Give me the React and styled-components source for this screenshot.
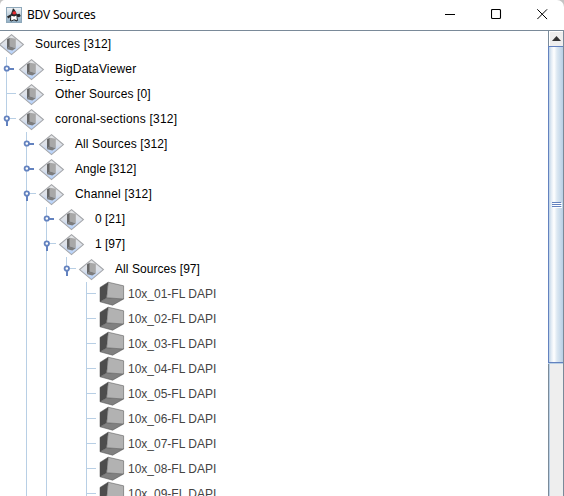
import React from "react";
import styled, { createGlobalStyle } from "styled-components";

const GlobalStyle = createGlobalStyle`
  html, body { margin: 0; padding: 0; background: #c4c4c4; overflow: hidden; }
  * { box-sizing: border-box; }
`;

const Window = styled.div`
  width: 564px;
  height: 496px;
  display: flex;
  flex-direction: column;
  background: #fff;
  overflow: hidden;
  border-radius: 5px 7px 0 0;
`;

const TitleBar = styled.header`
  flex: none;
  height: 30px;
  display: flex;
  align-items: center;
  padding-left: 6px;
`;

const Title = styled.h1`
  margin: 0 auto 0 5px;
  font: 400 12px/16px "Noto Sans", "Open Sans", sans-serif;
  letter-spacing: -0.22px;
  color: #000;
`;

const Controls = styled.div`
  display: flex;
  align-self: flex-start;
`;

const ControlButton = styled.button`
  width: 46px;
  height: 29px;
  padding: 0 0 0 3px;
  border: 0;
  background: none;
  display: grid;
  place-items: center;
`;

const Content = styled.main`
  flex: 1;
  min-height: 0;
  display: flex;
  border-top: 1px solid #7a8a99;
`;

const Tree = styled.ul`
  flex: 1;
  margin: 0;
  padding: 1px 0 0;
  list-style: none;
  overflow: hidden;
`;

const Row = styled.li`
  height: 25px;
  display: flex;
`;

const Guide = styled.svg`
  flex: none;
  display: block;
`;

const NodeIcon = styled.svg`
  flex: none;
  display: block;
  overflow: visible;
`;

const Label = styled.span`
  height: 25px;
  margin-left: ${(p) => (p.$leaf ? 3 : 10)}px;
  padding-top: 4px;
  white-space: pre;
  font: 12px/16px "Liberation Sans", Arial, sans-serif;
  letter-spacing: ${(p) => p.$spacing || 0}px;
  color: ${(p) => (p.$leaf ? "#444" : "#000")};
`;

const Clipped = styled.span`
  display: block;
  height: 4px;
  line-height: 16px;
  overflow: hidden;
`;

const ScrollBar = styled.aside`
  flex: none;
  width: 16px;
  display: flex;
  flex-direction: column;
  background: #eee;
  border-left: 1px solid #7a8a99;
  border-right: 1px solid #7a8a99;
  box-shadow: inset 1px 0 #b8cfe5;
`;

const ArrowButton = styled.button`
  height: 15px;
  padding: 0 0 2px;
  border: 0;
  border-top: 1px solid #fff;
  border-left: 1px solid #fff;
  background: #eee;
  display: grid;
  place-items: center;
`;

const Thumb = styled.div`
  height: 317px;
  margin-left: -1px;
  padding-left: 1px;
  border: 1px solid #6382bf;
  border-right: 0;
  box-shadow: 0 1px #b8cfe5;
  background: linear-gradient(90deg, #b8cfe5 0, #dfe9f3 2px, #fff 5px, #dce8f2 8px, #b8cfe5 14px);
  display: grid;
  place-items: center;
`;

const line = "#b8cfe5";
const accent = "#6382bf";

// One row's 25px-high slice of the connecting lines and its expand handle.
function Guides({ depth, through, handle, last, leaf }) {
  if (!depth) return null;
  const x = 6 + 20 * (depth - 1);
  return (
    <Guide width={20 * depth - (leaf ? 1 : 0)} height="25" shapeRendering="crispEdges">
      {through.map((d) => (
        <rect key={d} x={6 + 20 * (d - 1)} y="0" width="1" height="25" fill={line} />
      ))}
      <rect x={x} y="0" width="1" height={last ? 12 : 25} fill={line} />
      <rect x={x} y="11" width={handle === "closed" ? 7 : 10} height="1" fill={line} />
      {handle && (
        <g shapeRendering="auto">
          <circle cx={x + 0.8} cy="11.5" r="2.2" fill="#fff" stroke={accent} strokeWidth="1.8" />
          {handle === "closed" ? (
            <rect x={x + 3} y="11" width="5" height="2" fill={accent} />
          ) : (
            <rect x={x} y="14" width="2" height="5" fill={accent} />
          )}
        </g>
      )}
    </Guide>
  );
}

function GroupIcon() {
  return (
    <NodeIcon width="25" height="25" viewBox="0 0 25 25">
      <defs>
        <linearGradient id="diamond" x1="0" y1="0" x2="0" y2="1">
          <stop offset="0" stopColor="#e6e6e6" />
          <stop offset=".5" stopColor="#dde1e8" />
          <stop offset="1" stopColor="#b0d0ff" />
        </linearGradient>
      </defs>
      <path d="M11.5 2.6 23.4 12.6 11.5 22.6-.4 12.6Z" fill="url(#diamond)" stroke="#a4a6aa" strokeWidth="1.1" />
      <path d="M7 7.3 9.8 5.7V14.3L7 17.3Z" fill="#666" />
      <path d="M9.8 5.7 15.8 6.8V16.2L9.8 14.3Z" fill="#a8a8a8" />
      <path d="M7 17.3 9.8 14.3 15.8 16.2 12.4 18.4Z" fill="#7c7c7c" />
    </NodeIcon>
  );
}

function SourceIcon() {
  return (
    <NodeIcon width="26" height="25" viewBox="0 0 26 25">
      <path d="M1 5.4 9.2.2 7.6 16 1 19.8Z" fill="#4d4d4d" />
      <path d="M9.2.2 24.6 3.8V17L7.6 15.8Z" fill="#b2b2b2" />
      <path d="M1 19.8 7.6 15.8 24.6 17 13.6 23.2Z" fill="#808080" />
      <path d="M1 19.8V5.4L9.2.2 24.6 3.8V17L13.6 23.2ZM9.2.2 7.6 15.8 1 19.8M7.6 15.8 24.6 17" fill="none" stroke="#4b4b4b" strokeWidth=".5" />
    </NodeIcon>
  );
}

function JavaIcon() {
  return (
    <NodeIcon width="16" height="16" viewBox="0 0 16 16">
      <defs>
        <linearGradient id="tile" x1="0" y1="0" x2="0" y2="1">
          <stop offset="0" stopColor="#f1f4f7" />
          <stop offset="1" stopColor="#8fadc3" />
        </linearGradient>
      </defs>
      <rect x=".5" y=".5" width="15" height="15" fill="url(#tile)" stroke="#8ea8ba" />
      <path d="M7 1.2C8.8 2.2 10 5 10.8 7.3L13.6 6.7 14.8 9 13 10.2 11.3 9.8 12 13.5 10.6 14.5 8 13.3 5.2 14.5 3.8 13.6 4.4 10 2.2 11.4 1 9.6 4.9 7.2Z" fill="#24272b" />
      <path d="m5.2 8.7 3 .9 2.2-1 .5 4.6-2.7-1-3.1 1.2Z" fill="#fff" />
      <ellipse cx="8.3" cy="5.9" rx="1.9" ry="1.6" fill="#e52a2f" />
    </NodeIcon>
  );
}

const groups = [
  { label: "Sources [312]", depth: 0, through: [], spacing: 0.18 },
  { label: "BigDataViewer", depth: 1, through: [], handle: "closed", overflow: "[85]", spacing: 0.17 },
  { label: "Other Sources [0]", depth: 1, through: [], spacing: 0.09 },
  { label: "coronal-sections [312]", depth: 1, through: [], handle: "open", last: true, spacing: 0.22 },
  { label: "All Sources [312]", depth: 2, through: [], handle: "closed", spacing: 0.1 },
  { label: "Angle [312]", depth: 2, through: [], handle: "closed", spacing: 0.05 },
  { label: "Channel [312]", depth: 2, through: [], handle: "open", spacing: 0.17 },
  { label: "0 [21]", depth: 3, through: [2], handle: "closed" },
  { label: "1 [97]", depth: 3, through: [2], handle: "open" },
  { label: "All Sources [97]", depth: 4, through: [2, 3], handle: "open", last: true, spacing: 0.06 },
];

const leaves = Array.from({ length: 9 }, (_, i) => ({
  label: `10x_0${i + 1}-FL DAPI`,
  depth: 5,
  through: [2, 3],
  leaf: true,
}));

export default function App() {
  return (
    <>
      <GlobalStyle />
      <Window>
        <TitleBar>
          <JavaIcon />
          <Title>BDV Sources</Title>
          <Controls>
            <ControlButton aria-label="Minimize">
              <svg width="11" height="11"><path d="M0 5.5H10" stroke="#000" /></svg>
            </ControlButton>
            <ControlButton aria-label="Maximize">
              <svg width="11" height="11"><rect x=".5" y=".5" width="9" height="9" rx="1" fill="none" stroke="#000" strokeWidth="1.1" /></svg>
            </ControlButton>
            <ControlButton aria-label="Close">
              <svg width="11" height="11"><path d="m.3.3 9.8 9.8m0-9.8L.3 10.1" stroke="#000" /></svg>
            </ControlButton>
          </Controls>
        </TitleBar>
        <Content>
          <Tree>
            {[...groups, ...leaves].map((n) => (
              <Row key={n.label + n.depth}>
                <Guides {...n} />
                {n.leaf ? <SourceIcon /> : <GroupIcon />}
                <Label $leaf={n.leaf} $spacing={n.spacing}>
                  {n.label}
                  {n.overflow && <Clipped>{n.overflow}</Clipped>}
                </Label>
              </Row>
            ))}
          </Tree>
          <ScrollBar>
            <ArrowButton aria-label="Scroll up">
              <svg width="9" height="5"><path d="M4.5 0 9 5H0Z" fill="#333" /></svg>
            </ArrowButton>
            <Thumb>
              <svg width="10" height="6" shapeRendering="crispEdges">
                <path d="M0 .5H9M0 2.5H9M0 4.5H9" stroke="#6382bf" />
                <path d="M1 1.5H10M1 3.5H10M1 5.5H10" stroke="#fff" />
              </svg>
            </Thumb>
          </ScrollBar>
        </Content>
      </Window>
    </>
  );
}
